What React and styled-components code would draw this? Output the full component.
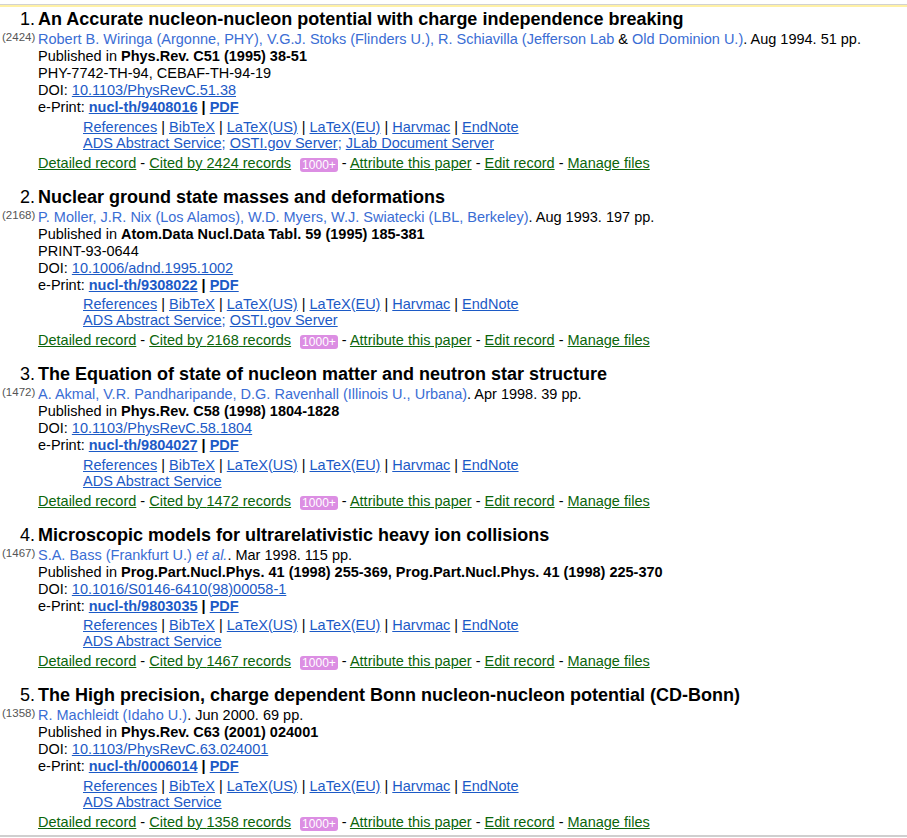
import React from 'react';
import styled, { createGlobalStyle } from 'styled-components';

const GlobalStyle = createGlobalStyle`
    html, body {
        margin: 0;
        padding: 0;
        background: #ffffff;
    }
    body {
        font-family: "Liberation Sans", Arial, sans-serif;
        font-size: 14.5px;
        color: #000000;
    }
`

const Page = styled.div`
    margin-top: 4px;
    border-top: 1px solid #d2d2d2;
`

const TopStripe = styled.div`
    height: 2px;
    background: #fff1a6;
    margin-bottom: 1px;
`

const List = styled.div`
    display: flex;
    flex-direction: column;
    gap: 14px;
    padding-bottom: 4px;
    border-bottom: 2px solid #cfcfcf;
`

const Item = styled.div`
    display: flex;
    flex-direction: column;
`

const HeadRow = styled.div`
    display: flex;
    align-items: baseline;
    line-height: 22px;
    height: 22px;
`

const Num = styled.span`
    width: 38px;
    flex: none;
    box-sizing: border-box;
    padding-right: 3px;
    text-align: right;
    font-size: 18px;
`

const Title = styled.span`
    font-size: 18px;
    font-weight: bold;
    white-space: nowrap;
`

const BodyRow = styled.div`
    display: flex;
    align-items: flex-start;
    margin-top: 1px;
`

const Count = styled.span`
    width: 38px;
    flex: none;
    box-sizing: border-box;
    padding-left: 2px;
    font-size: 11.5px;
    line-height: 12px;
    color: #555555;
`

const Body = styled.div`
    display: flex;
    flex-direction: column;
    line-height: 17px;
`

const Line = styled.div`
    white-space: nowrap;
    height: ${p => p.$h || 17}px;
`

const AuthorLink = styled.span`
    color: #3a6dd4;
    font-style: ${p => (p.$italic ? 'italic' : 'normal')};
`

const Link = styled.a`
    color: #1c5ac6;
    text-decoration: underline;
    font-weight: ${p => (p.$bold ? 'bold' : 'normal')};
    cursor: pointer;
`

const Sep = styled.span`
    font-weight: ${p => (p.$bold ? 'bold' : 'normal')};
`

const LinksBlock = styled.div`
    margin-top: 2.5px;
    margin-left: 45px;
    line-height: 16px;
    display: flex;
    flex-direction: column;
`

const Plain = styled.span`
    color: #1c5ac6;
`

const Footer = styled.div`
    margin-top: 4px;
    line-height: 17px;
    height: 17px;
    white-space: nowrap;
`

const GreenLink = styled.a`
    color: #0b650b;
    text-decoration: underline;
    cursor: pointer;
`

const Badge = styled.span`
    display: inline-block;
    margin-left: 9px;
    padding: 0 2px;
    height: 14px;
    line-height: 14px;
    border-radius: 3px;
    background: #dc8ee3;
    color: #ffffff;
    font-size: 12px;
    vertical-align: -1px;
`

const records = [
    {
        title: 'An Accurate nucleon-nucleon potential with charge independence breaking',
        cites: 2424,
        groups: [
            { names: ['Robert B. Wiringa'], affs: ['Argonne, PHY'] },
            { names: ['V.G.J. Stoks'], affs: ['Flinders U.'] },
            { names: ['R. Schiavilla'], affs: ['Jefferson Lab', 'Old Dominion U.'] },
        ],
        date: 'Aug 1994. 51 pp.',
        pub: 'Phys.Rev. C51 (1995) 38-51',
        report: 'PHY-7742-TH-94, CEBAF-TH-94-19',
        doi: '10.1103/PhysRevC.51.38',
        eprint: 'nucl-th/9408016',
        ext: ['ADS Abstract Service', 'OSTI.gov Server', 'JLab Document Server'],
    },
    {
        title: 'Nuclear ground state masses and deformations',
        cites: 2168,
        groups: [
            { names: ['P. Moller', 'J.R. Nix'], affs: ['Los Alamos'] },
            { names: ['W.D. Myers', 'W.J. Swiatecki'], affs: ['LBL, Berkeley'] },
        ],
        date: 'Aug 1993. 197 pp.',
        pub: 'Atom.Data Nucl.Data Tabl. 59 (1995) 185-381',
        report: 'PRINT-93-0644',
        doi: '10.1006/adnd.1995.1002',
        eprint: 'nucl-th/9308022',
        ext: ['ADS Abstract Service', 'OSTI.gov Server'],
    },
    {
        title: 'The Equation of state of nucleon matter and neutron star structure',
        cites: 1472,
        groups: [
            { names: ['A. Akmal', 'V.R. Pandharipande', 'D.G. Ravenhall'], affs: ['Illinois U., Urbana'] },
        ],
        date: 'Apr 1998. 39 pp.',
        pub: 'Phys.Rev. C58 (1998) 1804-1828',
        doi: '10.1103/PhysRevC.58.1804',
        eprint: 'nucl-th/9804027',
        ext: ['ADS Abstract Service'],
    },
    {
        title: 'Microscopic models for ultrarelativistic heavy ion collisions',
        cites: 1467,
        groups: [{ names: ['S.A. Bass'], affs: ['Frankfurt U.'] }],
        etAl: true,
        date: 'Mar 1998. 115 pp.',
        pub: 'Prog.Part.Nucl.Phys. 41 (1998) 255-369, Prog.Part.Nucl.Phys. 41 (1998) 225-370',
        doi: '10.1016/S0146-6410(98)00058-1',
        eprint: 'nucl-th/9803035',
        ext: ['ADS Abstract Service'],
    },
    {
        title: 'The High precision, charge dependent Bonn nucleon-nucleon potential (CD-Bonn)',
        cites: 1358,
        groups: [{ names: ['R. Machleidt'], affs: ['Idaho U.'] }],
        date: 'Jun 2000. 69 pp.',
        pub: 'Phys.Rev. C63 (2001) 024001',
        doi: '10.1103/PhysRevC.63.024001',
        eprint: 'nucl-th/0006014',
        ext: ['ADS Abstract Service'],
    },
]

const formats = ['References', 'BibTeX', 'LaTeX(US)', 'LaTeX(EU)', 'Harvmac', 'EndNote']

const Authors = ({ rec }) => (
    <Line>
        {rec.groups.map((g, i) => (
            <React.Fragment key={i}>
                {i > 0 && <AuthorLink>, </AuthorLink>}
                <AuthorLink>{g.names.join(', ')} (</AuthorLink>
                {g.affs.map((a, j) => (
                    <React.Fragment key={j}>
                        {j > 0 && ' & '}
                        <AuthorLink>{a}</AuthorLink>
                    </React.Fragment>
                ))}
                <AuthorLink>)</AuthorLink>
            </React.Fragment>
        ))}
        {rec.etAl && <> <AuthorLink $italic>et al.</AuthorLink></>}
        . {rec.date}
    </Line>
)

const Record = ({ rec, n }) => (
    <Item>
        <HeadRow>
            <Num>{n}.</Num>
            <Title>{rec.title}</Title>
        </HeadRow>
        <BodyRow>
            <Count>({rec.cites})</Count>
            <Body>
                <Authors rec={rec} />
                <Line>Published in <b>{rec.pub}</b></Line>
                {rec.report && <Line>{rec.report}</Line>}
                <Line>DOI: <Link>{rec.doi}</Link></Line>
                <Line>
                    e-Print: <Link $bold>{rec.eprint}</Link> <Sep $bold>|</Sep> <Link $bold>PDF</Link>
                </Line>
                <LinksBlock>
                    <Line $h={16}>
                        {formats.map((f, i) => (
                            <React.Fragment key={f}>
                                {i > 0 && <Sep> | </Sep>}
                                <Link>{f}</Link>
                            </React.Fragment>
                        ))}
                    </Line>
                    <Line $h={16}>
                        {rec.ext.map((e, i) => (
                            <React.Fragment key={e}>
                                {i > 0 && <Plain>; </Plain>}
                                <Link>{e}</Link>
                            </React.Fragment>
                        ))}
                    </Line>
                </LinksBlock>
                <Footer>
                    <GreenLink>Detailed record</GreenLink> - <GreenLink>Cited by {rec.cites} records</GreenLink>
                    <Badge>1000+</Badge> - <GreenLink>Attribute this paper</GreenLink> - <GreenLink>Edit record</GreenLink> - <GreenLink>Manage files</GreenLink>
                </Footer>
            </Body>
        </BodyRow>
    </Item>
)

const App = () => {
    return (
        <>
            <GlobalStyle />
            <Page>
                <TopStripe />
                <List>
                    {records.map((r, i) => (
                        <Record key={r.eprint} rec={r} n={i + 1} />
                    ))}
                </List>
            </Page>
        </>
    )
}

export default App;
